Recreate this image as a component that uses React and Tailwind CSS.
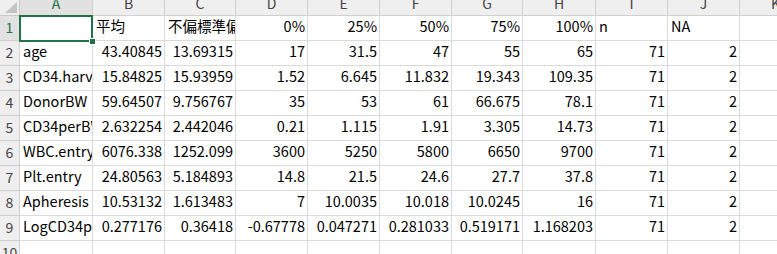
import React from "react";

const cols = ["A", "B", "C", "D", "E", "F", "G", "H", "I", "J", "K"];

const rows = [
  [["", "l"], ["平均", "l"], ["不偏標準偏差", "l"], ["0%", "r"], ["25%", "r"], ["50%", "r"], ["75%", "r"], ["100%", "r"], ["n", "l"], ["NA", "l"], ["", "l"]],
  ["age", "43.40845", "13.69315", "17", "31.5", "47", "55", "65", "71", "2"],
  ["CD34.harvest", "15.84825", "15.93959", "1.52", "6.645", "11.832", "19.343", "109.35", "71", "2"],
  ["DonorBW", "59.64507", "9.756767", "35", "53", "61", "66.675", "78.1", "71", "2"],
  ["CD34perBW", "2.632254", "2.442046", "0.21", "1.115", "1.91", "3.305", "14.73", "71", "2"],
  ["WBC.entry", "6076.338", "1252.099", "3600", "5250", "5800", "6650", "9700", "71", "2"],
  ["Plt.entry", "24.80563", "5.184893", "14.8", "21.5", "24.6", "27.7", "37.8", "71", "2"],
  ["Apheresis", "10.53132", "1.613483", "7", "10.0035", "10.018", "10.0245", "16", "71", "2"],
  ["LogCD34perBW", "0.277176", "0.36418", "-0.67778", "0.047271", "0.281033", "0.519171", "1.168203", "71", "2"],
];

function normRow(r) {
  if (Array.isArray(r[0])) return r;
  const out = r.map((v, i) => [v, i === 0 ? "l" : "r"]);
  out.push(["", "l"]);
  return out;
}

const font = { fontFamily: '"Noto Sans CJK JP", "Noto Sans", sans-serif' };

export default function App() {
  const data = rows.map(normRow);
  data.push(Array.from({ length: 11 }, () => ["", "l"]));
  return (
    <div className="w-[777px] h-[254px] overflow-hidden bg-white" style={font}>
      <div className="grid grid-cols-[20px_73px_72px_71px_72px_72px_72px_71px_73px_72px_72px_72px] grid-rows-[16px_repeat(10,25px)] w-[812px]">
        {/* corner */}
        <div className="bg-[#efefef] border-r border-b border-[#c9c9c9] relative overflow-hidden">
          <svg width="19" height="15" className="absolute left-0 top-0">
            <polygon points="17,2 17,13 5,13" fill="#c4c4c4" />
          </svg>
        </div>
        {cols.map((c, i) => (
          <div
            key={c}
            className={`${i === 0 ? "bg-[#e1e1e1] text-[#217346]" : "bg-[#efefef] text-[#444444]"} border-r border-b border-[#d0d0d0] overflow-hidden text-center text-[14px] leading-[14px]`}
          >
            <div className="-mt-[4px]">{c}</div>
          </div>
        ))}
        {data.map((r, ri) => (
          <React.Fragment key={ri}>
            <div
              className={`${ri === 0 ? "bg-[#e1e1e1] text-[#217346]" : "bg-[#efefef] text-[#444444]"} border-r border-b border-[#d0d0d0] text-center text-[14px] leading-[20px] overflow-hidden`}
            >
              <div className="pt-[1px]">{ri + 1}</div>
            </div>
            {r.map(([v, a], ci) => (
              <div
                key={ci}
                className={`relative border-r border-b border-[#dadada] text-[14.5px] leading-[20px] text-black whitespace-nowrap ${a === "r" ? "text-right pr-[2px]" : "text-left pl-[3px]"} ${ri === 0 && ci === 0 ? "" : "overflow-hidden"}`}
              >
                {v}
                {ri === 0 && ci === 0 && (
                  <>
                    <div className="absolute -left-[1px] -top-[1px] w-[74px] h-[27px] border-2 border-[#217346] z-10" />
                    <div className="absolute left-[69px] top-[22px] w-[7px] h-[7px] bg-[#217346] border border-white z-20" />
                  </>
                )}
              </div>
            ))}
          </React.Fragment>
        ))}
      </div>
    </div>
  );
}
